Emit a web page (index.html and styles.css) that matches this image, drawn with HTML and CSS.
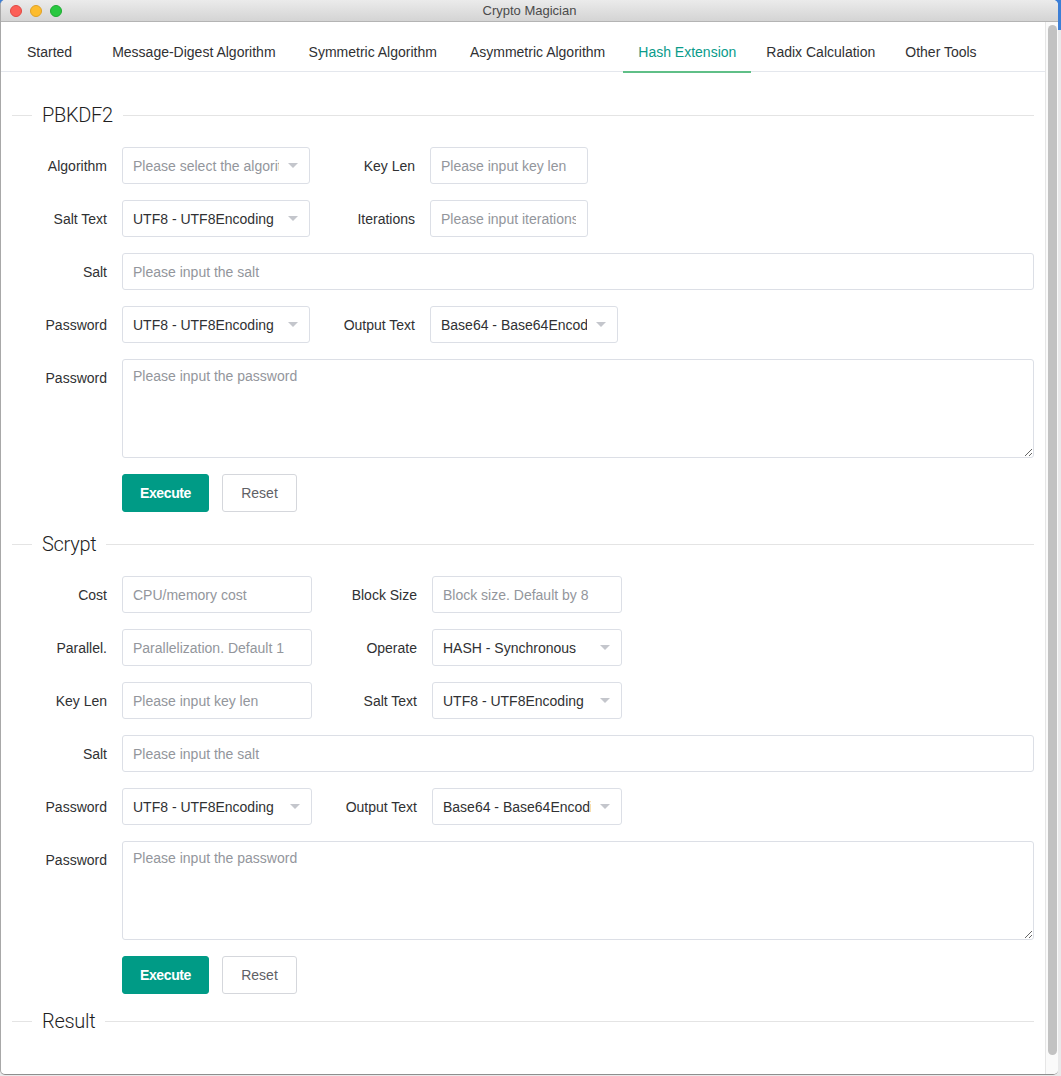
FILE: index.html
```html
<!DOCTYPE html>
<html>
<head>
<meta charset="utf-8">
<title>Crypto Magician</title>
<link rel="stylesheet" href="styles.css">
</head>
<body>
<div class="window">
  <div class="titlebar">
    <div class="lights">
      <span class="light red"></span>
      <span class="light yellow"></span>
      <span class="light green"></span>
    </div>
    <div class="title">Crypto Magician</div>
  </div>
  <div class="body">
    <div class="main">
      <nav class="tabs">
        <div class="tab first">Started</div>
        <div class="tab">Message-Digest Algorithm</div>
        <div class="tab">Symmetric Algorithm</div>
        <div class="tab">Asymmetric Algorithm</div>
        <div class="tab active">Hash Extension</div>
        <div class="tab narrow">Radix Calculation</div>
        <div class="tab narrow">Other Tools</div>
      </nav>
      <div class="content">
        <div class="divider"><span class="divider-text">PBKDF2</span></div>
        <div class="form">
          <div class="row">
            <div class="item">
              <label class="label">Algorithm</label>
              <div class="select w188"><input class="input sel" readonly placeholder="Please select the algorithm"><i class="arrow"></i></div>
            </div>
            <div class="item">
              <label class="label">Key Len</label>
              <input class="input w158" placeholder="Please input key len">
            </div>
          </div>
          <div class="row">
            <div class="item">
              <label class="label">Salt Text</label>
              <div class="select w188"><input class="input sel" readonly value="UTF8 - UTF8Encoding"><i class="arrow"></i></div>
            </div>
            <div class="item">
              <label class="label">Iterations</label>
              <input class="input w158" placeholder="Please input iterations">
            </div>
          </div>
          <div class="row">
            <div class="item grow">
              <label class="label">Salt</label>
              <input class="input full" placeholder="Please input the salt">
            </div>
          </div>
          <div class="row">
            <div class="item">
              <label class="label">Password</label>
              <div class="select w188"><input class="input sel" readonly value="UTF8 - UTF8Encoding"><i class="arrow"></i></div>
            </div>
            <div class="item">
              <label class="label">Output Text</label>
              <div class="select w188"><input class="input sel" readonly value="Base64 - Base64Encoding"><i class="arrow"></i></div>
            </div>
          </div>
          <div class="row">
            <div class="item grow top">
              <label class="label tl">Password</label>
              <textarea class="textarea" placeholder="Please input the password"></textarea>
            </div>
          </div>
          <div class="buttons">
            <button class="btn primary">Execute</button>
            <button class="btn">Reset</button>
          </div>
        </div>

        <div class="divider"><span class="divider-text">Scrypt</span></div>
        <div class="form">
          <div class="row">
            <div class="item">
              <label class="label">Cost</label>
              <input class="input w190" placeholder="CPU/memory cost">
            </div>
            <div class="item">
              <label class="label">Block Size</label>
              <input class="input w190" placeholder="Block size. Default by 8">
            </div>
          </div>
          <div class="row">
            <div class="item">
              <label class="label">Parallel.</label>
              <input class="input w190" placeholder="Parallelization. Default 1">
            </div>
            <div class="item">
              <label class="label">Operate</label>
              <div class="select w190"><input class="input sel" readonly value="HASH - Synchronous"><i class="arrow"></i></div>
            </div>
          </div>
          <div class="row">
            <div class="item">
              <label class="label">Key Len</label>
              <input class="input w190" placeholder="Please input key len">
            </div>
            <div class="item">
              <label class="label">Salt Text</label>
              <div class="select w190"><input class="input sel" readonly value="UTF8 - UTF8Encoding"><i class="arrow"></i></div>
            </div>
          </div>
          <div class="row">
            <div class="item grow">
              <label class="label">Salt</label>
              <input class="input full" placeholder="Please input the salt">
            </div>
          </div>
          <div class="row">
            <div class="item">
              <label class="label">Password</label>
              <div class="select w190"><input class="input sel" readonly value="UTF8 - UTF8Encoding"><i class="arrow"></i></div>
            </div>
            <div class="item">
              <label class="label">Output Text</label>
              <div class="select w190"><input class="input sel" readonly value="Base64 - Base64Encoding"><i class="arrow"></i></div>
            </div>
          </div>
          <div class="row">
            <div class="item grow top">
              <label class="label tl">Password</label>
              <textarea class="textarea" placeholder="Please input the password"></textarea>
            </div>
          </div>
          <div class="buttons">
            <button class="btn primary">Execute</button>
            <button class="btn">Reset</button>
          </div>
        </div>

        <div class="divider last"><span class="divider-text">Result</span></div>
      </div>
    </div>
    <div class="scrollbar"><div class="thumb"></div></div>
  </div>
</div>
</body>
</html>
```

FILE: styles.css
```css
* { box-sizing: border-box; }
html, body { margin: 0; padding: 0; }
body {
  width: 1061px;
  height: 1076px;
  overflow: hidden;
  background: linear-gradient(#3d7fd6 0, #3d7fd6 30px, #e9e9ea 30px, #e9e9ea 100%);
  font-family: "Liberation Sans", Arial, Helvetica, sans-serif;
  font-size: 14px;
  color: #303133;
}
.window {
  width: 1058px;
  height: 1075px;
  background: #fff;
  border-left: 1px solid #a8a8a8;
  border-bottom: 1px solid #8e8e8e;
  border-radius: 5px;
  overflow: hidden;
  display: flex;
  flex-direction: column;
}
.titlebar {
  height: 22px;
  flex: none;
  position: relative;
  background: linear-gradient(#ebebeb, #d4d4d4);
  border-bottom: 1px solid #b4b4b4;
  display: flex;
  align-items: center;
  justify-content: center;
}
.lights {
  position: absolute;
  left: 9px;
  top: 5px;
  display: flex;
  gap: 8px;
}
.light {
  width: 12px;
  height: 12px;
  border-radius: 50%;
  display: block;
}
.red { background: #fc5f57; border: 1px solid #e04842; }
.yellow { background: #fdbc2e; border: 1px solid #dea126; }
.green { background: #28c840; border: 1px solid #1eaa31; }
.title {
  font-size: 13px;
  color: #4b4b4b;
  line-height: 21px;
}
.body {
  flex: 1;
  display: flex;
  min-height: 0;
}
.main {
  flex: 1;
  min-width: 0;
}
.scrollbar {
  width: 13px;
  flex: none;
  background: #fafafa;
  border-left: 1px solid #e6e6e6;
  padding: 3px 1px 0 2px;
}
.thumb {
  width: 9px;
  height: 1030px;
  border-radius: 5px;
  background: #c2c2c2;
}
.tabs {
  display: flex;
  padding: 10px 0 0 11px;
  height: 50px;
  border-bottom: 1px solid #e4e7ed;
}
.tab {
  height: 40px;
  line-height: 40px;
  padding: 0 18px 0 15px;
  font-size: 14px;
  color: #303133;
  white-space: nowrap;
}
.tab.first { padding-right: 25px; }
.tab.narrow { padding-right: 15px; }
.tab.active {
  color: #0a9b8a;
  box-shadow: inset 0 -2px 0 #5fbf87;
  height: 41px;
  padding: 0 15px;
}
.content {
  padding: 31px 11px 0 11px;
}
.divider {
  display: flex;
  align-items: center;
  height: 24px;
}
.divider::before {
  content: "";
  width: 20px;
  height: 1px;
  background: #e4e4e4;
}
.divider::after {
  content: "";
  flex: 1;
  height: 1px;
  background: #e4e4e4;
}
.divider-text {
  padding: 0 10px;
  font-family: Roboto, "Liberation Sans", sans-serif;
  font-weight: 300;
  font-size: 20px;
  letter-spacing: -0.3px;
  color: #1f1f1f;
  line-height: 24px;
}
.divider.last { margin-top: -5px; }
.form {
  padding: 20px 0 20px 0;
}
.row {
  display: flex;
  margin-bottom: 16px;
}
.item {
  display: flex;
  align-items: center;
  margin-right: 10px;
}
.item.grow { flex: 1; margin-right: 0; }
.item.top { align-items: flex-start; }
.label {
  width: 110px;
  flex: none;
  text-align: right;
  padding-right: 15px;
  font-size: 14px;
  color: #303133;
}
.label.tl { padding-top: 11px; }
.input {
  height: 37px;
  border: 1px solid #dcdfe6;
  border-radius: 3px;
  padding: 0 11px 0 10px;
  font-family: "Liberation Sans", Arial, sans-serif;
  font-size: 14px;
  color: #303133;
  background: #fff;
  outline: none;
}
.input::placeholder { color: #93969c; }
.textarea::placeholder { color: #93969c; }
.w158 { width: 158px; }
.w188 { width: 188px; }
.w190 { width: 190px; }
.full { flex: 1; width: auto; }
.select { position: relative; display: block; }
.select .input.sel {
  width: 100%;
  padding-right: 30px;
  cursor: pointer;
}
.arrow {
  position: absolute;
  right: 12px;
  top: 16px;
  width: 0;
  height: 0;
  border-left: 5px solid transparent;
  border-right: 5px solid transparent;
  border-top: 5px solid #c4c6cc;
}
.textarea {
  flex: 1;
  height: 99px;
  border: 1px solid #dcdfe6;
  border-radius: 3px;
  padding: 6px 10px;
  font-family: "Liberation Sans", Arial, sans-serif;
  font-size: 14px;
  line-height: 21px;
  resize: vertical;
  outline: none;
  display: block;
}
.buttons {
  display: flex;
  gap: 13px;
  padding-left: 110px;
}
.btn {
  height: 38px;
  border: 1px solid #d5d7dc;
  border-radius: 3px;
  background: #fff;
  color: #5f6166;
  font-family: "Liberation Sans", Arial, sans-serif;
  font-size: 14px;
  padding: 0;
  width: 75px;
  text-align: center;
}
.btn.primary {
  width: 87px;
  background: #009b86;
  border-color: #009b86;
  color: #fff;
  font-weight: bold;
  letter-spacing: -0.4px;
}
```
